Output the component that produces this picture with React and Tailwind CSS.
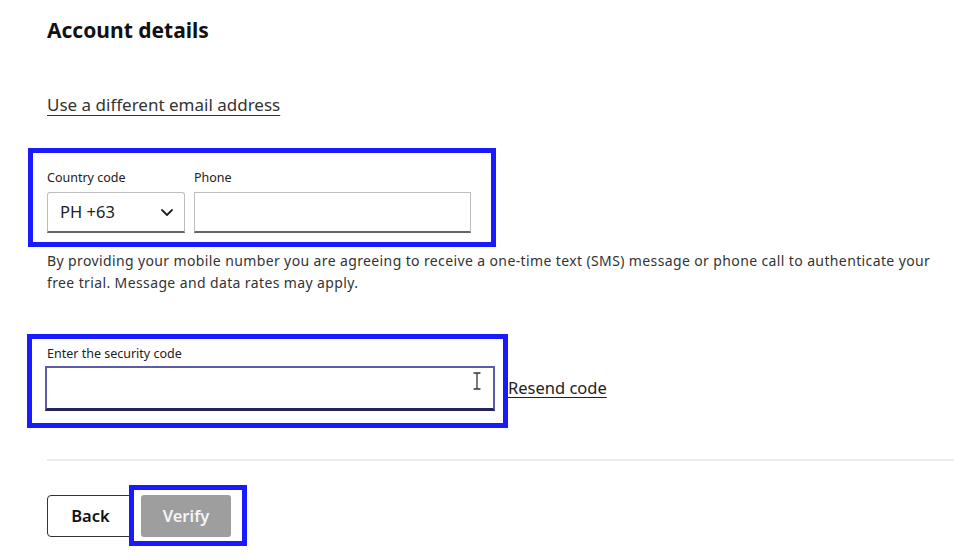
import React from "react";

export default function App() {
  return (
    <div className="w-[954px] h-[558px] bg-white overflow-hidden text-[#1f1f1f]" style={{ fontFamily: '"Noto Sans", "Open Sans", sans-serif' }}>
      <div className="pl-[47px] pt-[15px]">
        <h1 className="text-[21px] leading-[30px] font-bold text-[#111]">Account details</h1>

        <div className="mt-[48px]">
          <a className="text-[17px] leading-[24px] text-[#333] underline underline-offset-[4px] decoration-[1px]">Use a different email address</a>
        </div>

        <div className="relative mt-[52px] w-[424px]">
          <div className="absolute left-[-19px] top-[-21px] w-[468px] h-[99px] border-[5px] border-[#1a1aff] pointer-events-none" />
          <div className="flex gap-[9px]">
            <div className="flex flex-col">
              <label className="text-[12.5px] leading-[18px] text-[#222] mb-[5px]">Country code</label>
              <div className="w-[138px] h-[41px] border border-[#bdbdbd] border-b-2 border-b-[#666] rounded-t-[3px] flex items-center justify-between pl-[12px] pr-[10px]">
                <span className="text-[16.5px] text-[#222]">PH +63</span>
                <svg width="14" height="10" viewBox="0 0 14 10" fill="none">
                  <path d="M2 3l5 5 5-5" stroke="#222" strokeWidth="1.8" strokeLinecap="round" strokeLinejoin="round" />
                </svg>
              </div>
            </div>
            <div className="flex flex-col">
              <label className="text-[12.5px] leading-[18px] text-[#222] mb-[5px]">Phone</label>
              <div className="w-[277px] h-[41px] border border-[#bdbdbd] border-b-2 border-b-[#666]" />
            </div>
          </div>
        </div>

        <p className="mt-[17px] w-[900px] text-[14px] leading-[22px] tracking-[0.38px] text-[#333]">
          By providing your mobile number you are agreeing to receive a one-time text (SMS) message or phone call to authenticate your free trial. Message and data rates may apply.
        </p>

        <div className="relative mt-[51px] flex items-end">
          <div className="absolute left-[-20px] top-[-11px] w-[481px] h-[94px] border-[5px] border-[#1a1aff] pointer-events-none" />
          <div className="flex flex-col">
            <label className="text-[12.5px] leading-[18px] text-[#222] mb-[3px]">Enter the security code</label>
            <div className="relative -ml-[2px] w-[450px] h-[45px] border-2 border-[#5d5ca8] border-b-[3px] border-b-[#23235a] bg-white">
              <svg className="absolute left-[425px] top-[3px]" width="10" height="20" viewBox="0 0 10 20" fill="none">
                <path d="M2 2h2.5M5.5 2H8M5 2.5v15M2 18h2.5M5.5 18H8" stroke="#333" strokeWidth="1.3" strokeLinecap="round" />
              </svg>
            </div>
          </div>
          <a className="ml-[13px] mb-[11px] text-[16.5px] leading-[24px] text-[#222] underline underline-offset-[3px] decoration-[1px]">Resend code</a>
        </div>

        <div className="mt-[48px] h-[2px] bg-[#ededed]" />

        <div className="mt-[34px] flex gap-[6px]">
          <button className="w-[87px] h-[42px] border border-[#333] rounded-[4px] bg-white text-[16.5px] font-semibold text-[#111]">Back</button>
          <div className="relative">
            <div className="absolute left-[-11px] top-[-10px] w-[118px] h-[61px] border-[5px] border-[#1a1aff] pointer-events-none" />
            <button className="ml-[1px] w-[90px] h-[42px] rounded-[3px] bg-[#9e9e9e] text-[16.5px] font-semibold text-[#f5f5f5]">Verify</button>
          </div>
        </div>
      </div>
    </div>
  );
}
